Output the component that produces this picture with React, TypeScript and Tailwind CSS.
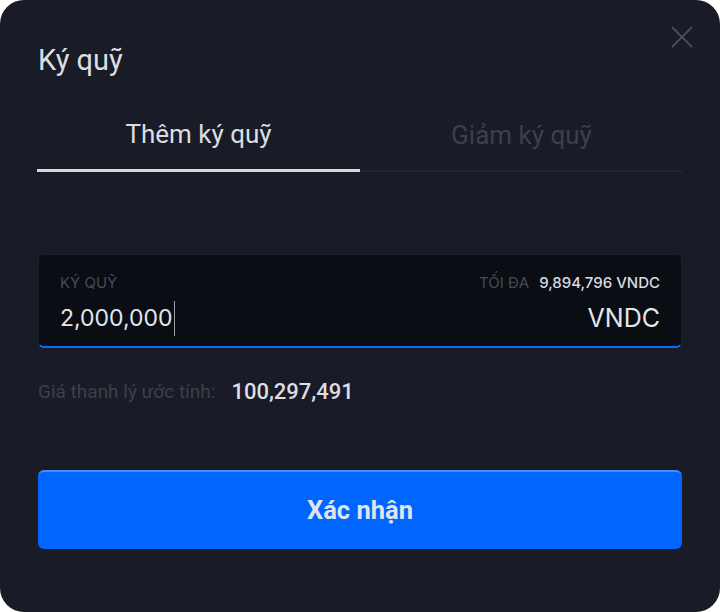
import { useState } from "react";

const TABS = ["Thêm ký quỹ", "Giảm ký quỹ"];

export default function App() {
  const [tab, setTab] = useState(0);
  const [amount] = useState("2,000,000");

  return (
    <div className="w-[720px] h-[612px] bg-white">
      <div className="relative w-full h-full rounded-[24px] bg-[#191c26] px-[38px] pt-[42px] font-[Roboto,sans-serif]">
        {/* close */}
        <button className="absolute right-[27px] top-[26px] w-[22px] h-[22px] text-[#474d59]">
          <svg viewBox="0 0 22 22" width="22" height="22" fill="none" stroke="currentColor" strokeWidth="1.8" strokeLinecap="round">
            <path d="M1.5 1.5 20.5 20.5" />
            <path d="M20.5 1.5 1.5 20.5" />
          </svg>
        </button>

        <h2 className="text-[29px] leading-[36px] text-[#dcdee3]">Ký quỹ</h2>

        {/* TABS */}
        <div className="flex items-end mt-[41px] -mx-px">
          {TABS.map((t, i) => (
            <button
              key={t}
              onClick={() => setTab(i)}
              className="flex-1 flex flex-col items-stretch"
            >
              <span
                className={
                  "text-[26px] leading-[30px] pb-[20px] " +
                  (tab === i ? "text-[#dcdee3]" : "text-[#3a404c]")
                }
              >
                {t}
              </span>
              {tab === i ? (
                <span className="h-[3px] bg-[#d6d8dc]" />
              ) : (
                <span className="h-[2px] bg-[#22252e]" />
              )}
            </button>
          ))}
        </div>

        {/* INPUT */}
        <div className="mt-[82px] rounded-[6px] bg-[#0a0d14] border border-[#1c1f28] border-b-2 border-b-[#0a6ef5] px-[21px] pt-[19px] pb-[10px] font-[Inter,sans-serif]">
          <div className="flex items-center justify-between text-[15px] leading-[18px]">
            <span className="text-[#454b57]">KÝ QUỸ</span>
            <span className="flex items-center gap-[10px]">
              <span className="text-[#454b57]">TỐI ĐA</span>
              <span className="text-[#d9dbe0] font-medium">9,894,796 VNDC</span>
            </span>
          </div>
          <div className="flex items-center justify-between mt-[9px] h-[35px] text-[#e4e6ea]">
            <span className="flex items-center text-[23px]">
              {amount}
              <span className="w-px h-[35px] bg-[#9aa0aa] ml-px" />
            </span>
            <span className="text-[25px]">VNDC</span>
          </div>
        </div>

        {/* ESTIMATE */}
        <div className="flex items-center gap-[16px] mt-[30px] leading-[28px]">
          <span className="text-[19px] text-[#3a404c]">Giá thanh lý ước tính:</span>
          <span className="text-[22px] font-medium text-[#dcdee3]">100,297,491</span>
        </div>

        {/* CONFIRM */}
        <button className="mt-[64px] w-full h-[79px] rounded-[6px] bg-[#0066ff] border-t-2 border-[#4a8cf2] text-[25.5px] font-bold text-[#dfe4ec]">
          Xác nhận
        </button>
      </div>
    </div>
  );
}
